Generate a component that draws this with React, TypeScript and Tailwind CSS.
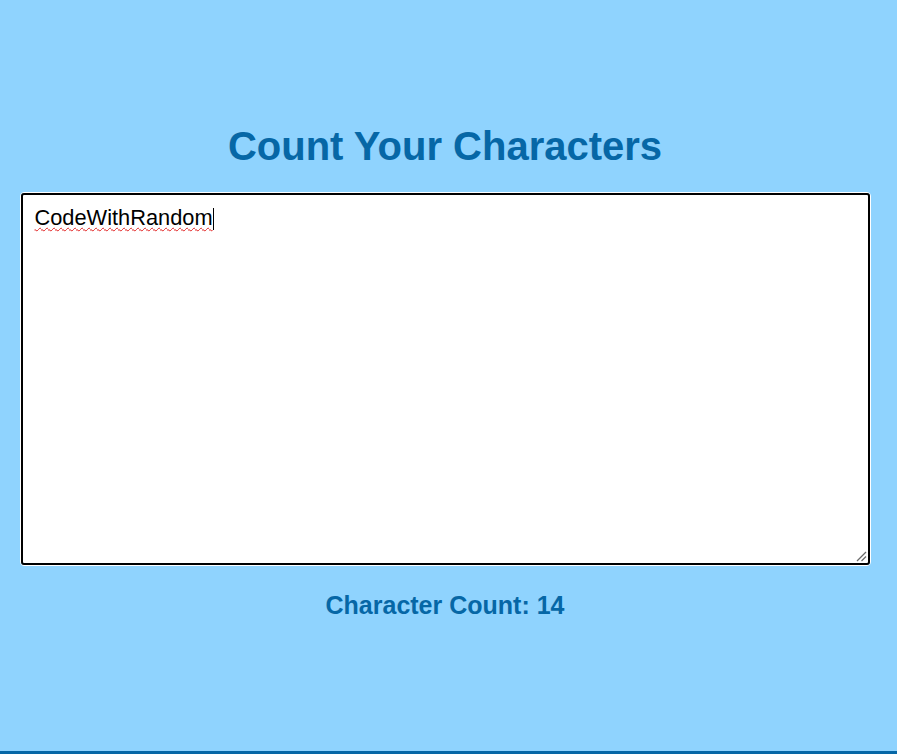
import React from "react";

export default function App() {
  return (
    <div
      className="relative flex h-[754px] w-full flex-col items-center bg-[#8fd3fe] pr-[7px]"
      style={{ fontFamily: '"Liberation Sans", Arial, sans-serif' }}
    >
      <h1 className="mt-[126px] text-[40px] font-bold leading-none text-[#0667a6]">
        Count Your Characters
      </h1>
      <div className="mt-[26px] w-[851px] rounded-[4px] border border-white">
        <div className="relative h-[372px] rounded-[3px] border-2 border-black bg-white pl-[12px] pt-[11px]">
          <div className="flex items-start text-[21.8px] leading-[24.7px] text-black">
            <span className="underline decoration-[#e02020] decoration-wavy decoration-1 underline-offset-[2px]">
              CodeWithRandom
            </span>
            <span className="mt-[2px] h-[22px] w-px bg-black" />
          </div>
          <svg
            className="absolute bottom-[1px] right-[1px]"
            width="12"
            height="12"
            viewBox="0 0 12 12"
          >
            <line x1="2" y1="11" x2="11" y2="2" stroke="#6b6b6b" strokeWidth="1.2" />
            <line x1="6.5" y1="11" x2="11" y2="6.5" stroke="#6b6b6b" strokeWidth="1.2" />
          </svg>
        </div>
      </div>
      <div className="mt-[27px] text-[25px] font-bold leading-none text-[#0667a6]">
        Character Count: 14
      </div>
      <div className="absolute bottom-0 left-0 h-[3px] w-full bg-[#0667a6]" />
    </div>
  );
}
